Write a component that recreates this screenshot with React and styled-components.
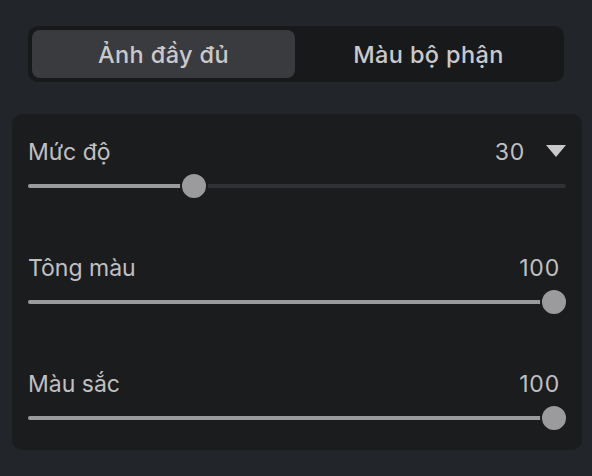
import React from "react";
import styled, { createGlobalStyle } from "styled-components";

const Global = createGlobalStyle`
  html, body { margin: 0; padding: 0; background: #222529; }
  body { font-family: Inter, "Noto Sans", sans-serif; -webkit-font-smoothing: antialiased; }
`;

const Page = styled.div`
  width: 592px;
  height: 476px;
  box-sizing: border-box;
  padding: 26px 10px 0 12px;
  display: flex;
  flex-direction: column;
  gap: 32px;
`;

const Segmented = styled.div`
  margin: 0 18px 0 16px;
  height: 56px;
  box-sizing: border-box;
  padding: 4px;
  background: #18191b;
  border-radius: 10px;
  display: grid;
  grid-template-columns: 1fr 1fr;
  gap: 2px;
`;

const Tab = styled.div`
  display: flex;
  align-items: center;
  justify-content: center;
  border-radius: 8px;
  background: ${(p) => (p.$active ? "#3a3b3e" : "transparent")};
  color: #c9c9cb;
  font-size: 23.5px;
  font-weight: 500;
  letter-spacing: 0.4px;
  padding-top: 1px;
`;

const Panel = styled.div`
  background: #1b1c1e;
  border-radius: 10px;
  height: 336px;
  box-sizing: border-box;
  padding: 24px 16px 18px 16px;
  display: flex;
  flex-direction: column;
  gap: 54px;
`;

const Row = styled.div`
  display: flex;
  flex-direction: column;
  gap: 6px;
`;

const Header = styled.div`
  display: flex;
  align-items: center;
  justify-content: space-between;
  height: 28px;
  line-height: 28px;
  font-size: 23px;
  color: #c0c0c2;
  font-weight: 400;
`;

const Value = styled.div`
  display: flex;
  align-items: center;
  gap: 21px;
  letter-spacing: 0.8px;
  padding-right: ${(p) => (p.$menu ? "0" : "6px")};
`;

const Caret = styled.span`
  width: 0;
  height: 0;
  border-left: 10px solid transparent;
  border-right: 10px solid transparent;
  border-top: 12px solid #c9c9cb;
  margin-top: -2px;
`;

const Track = styled.div`
  position: relative;
  height: 28px;
  display: flex;
  align-items: center;
`;

const Rail = styled.div`
  width: 100%;
  height: 4px;
  border-radius: 2px;
  background: #303134;
  position: relative;
  overflow: hidden;
`;

const Fill = styled.div`
  height: 100%;
  background: #9b9b9d;
`;

const Thumb = styled.div`
  position: absolute;
  top: 0;
  width: 28px;
  height: 28px;
  box-sizing: border-box;
  border-radius: 50%;
  background: #9b9b9d;
  border: 2px solid #1b1c1e;
`;

function Slider({ value }) {
  const w = 538;
  const left = -2 + (value / 100) * (w - 24);
  return (
    <Track>
      <Rail>
        <Fill style={{ width: `${left + 14}px` }} />
      </Rail>
      <Thumb style={{ left: `${left}px` }} />
    </Track>
  );
}

const rows = [
  { label: "Mức độ", value: 30, menu: true },
  { label: "Tông màu", value: 100 },
  { label: "Màu sắc", value: 100 },
];

export default function App() {
  return (
    <>
      <Global />
      <Page>
        <Segmented>
          <Tab $active>Ảnh đầy đủ</Tab>
          <Tab>Màu bộ phận</Tab>
        </Segmented>
        <Panel>
          {rows.map((r) => (
            <Row key={r.label}>
              <Header>
                <span>{r.label}</span>
                <Value $menu={r.menu}>
                  <span>{r.value}</span>
                  {r.menu && <Caret />}
                </Value>
              </Header>
              <Slider value={r.value} />
            </Row>
          ))}
        </Panel>
      </Page>
    </>
  );
}
